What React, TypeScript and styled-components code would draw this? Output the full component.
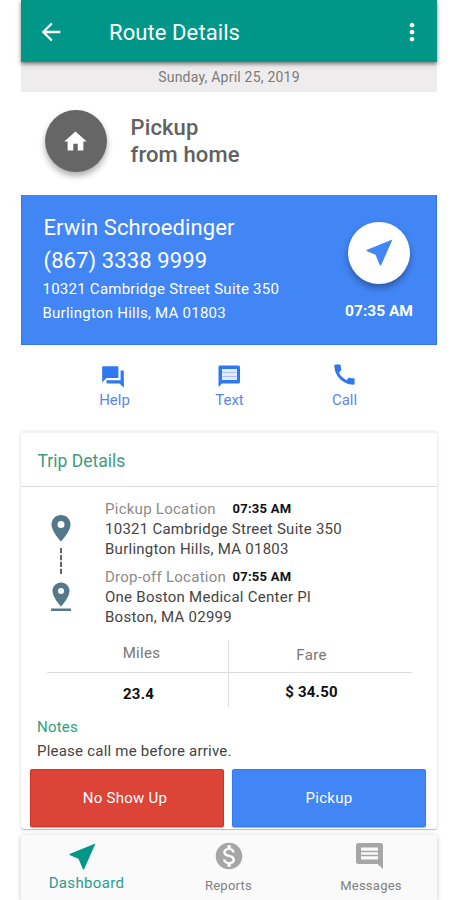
import React from 'react';
import styled, { createGlobalStyle } from 'styled-components';
import {
  MdArrowBack,
  MdCall,
  MdForum,
  MdHome,
  MdMonetizationOn,
  MdMoreVert,
} from 'react-icons/md';

const GlobalStyle = createGlobalStyle`
  * { box-sizing: border-box; }
  body { margin: 0; background: #fff; font-family: Roboto, sans-serif; }
  svg { display: block; flex: none; }
`;

const Screen = styled.main`
  width: 416px;
  height: 900px;
  margin-left: 21px;
  display: flex;
  flex-direction: column;
`;

const AppBar = styled.header`
  flex: none;
  height: 62px;
  padding: 2px 11px 0 15.5px;
  display: flex;
  align-items: center;
  background: #009788;
  color: #fff;
  box-shadow: 0 2px 4px rgba(0, 0, 0, 0.5);
  z-index: 1;
`;

const Title = styled.h1`
  flex: 1;
  margin: 2px 0 0 44.5px;
  font-size: 22px;
  font-weight: 450;
  letter-spacing: 0.09px;
  line-height: 28px;
`;

const DateBar = styled.div`
  flex: none;
  height: 29.5px;
  background: #eeecec;
  color: #7b7b7b;
  font-size: 14px;
  letter-spacing: 0.22px;
  line-height: 30px;
  text-align: center;
`;

const StopBanner = styled.section`
  flex: none;
  height: 103.5px;
  padding: 18.5px 0 0 24px;
  display: flex;
  gap: 23.5px;
`;

const Round = styled.div<{ $bg: string; $fg: string; $nudge?: number }>`
  flex: none;
  width: 62px;
  height: 62px;
  padding-right: ${(p) => p.$nudge ?? 0}px;
  border-radius: 50%;
  display: flex;
  align-items: center;
  justify-content: center;
  background: ${(p) => p.$bg};
  color: ${(p) => p.$fg};
  box-shadow: 0 4px 6px rgba(0, 0, 0, 0.32);
`;

const StopTitle = styled.h2`
  margin: 5px 0 0;
  font-size: 22px;
  font-weight: 500;
  letter-spacing: 0.12px;
  line-height: 26.5px;
  color: #616161;
`;

const ContactCard = styled.section`
  flex: none;
  height: 150px;
  padding: 15.5px 22px 0 21.5px;
  display: flex;
  justify-content: space-between;
  background: #4285f4;
  border: solid #2f78ee;
  border-width: 0 1px 1px;
  color: #fff;
`;

const ContactPrimary = styled.div`
  font-size: 22px;
  line-height: 33px;
  letter-spacing: 0.1px;
`;

const ContactAddress = styled.div`
  margin-left: -1px;
  font-size: 15px;
  line-height: 24.5px;
  letter-spacing: 0.25px;
`;

const Eta = styled.div`
  width: 70px;
  padding-top: 11px;
  display: flex;
  flex-direction: column;
  align-items: center;
`;

const EtaTime = styled.div`
  margin: 17px 0 0;
  font-size: 15.5px;
  font-weight: 700;
  line-height: 20px;
  white-space: nowrap;
`;

const Actions = styled.nav`
  flex: none;
  height: 88px;
  padding: 18px 35px 0 36px;
  display: grid;
  grid-template-columns: repeat(3, 1fr);
`;

const Action = styled.div`
  display: flex;
  flex-direction: column;
  align-items: center;
  color: #2f78f0;
`;

const ActionIcon = styled.div<{ $right?: number; $bottom?: number }>`
  height: 27px;
  padding: 0 ${(p) => p.$right ?? 0}px ${(p) => p.$bottom ?? 0}px 0;
  display: flex;
  align-items: center;
`;

const ActionLabel = styled.span`
  font-size: 15px;
  line-height: 20px;
  color: #5a86ea;
`;

const TripCard = styled.section`
  flex: none;
  height: 395.5px;
  border-radius: 3px;
  background: #fff;
  box-shadow: 0 -3px 1px #f2f2f2, 0 0 4px rgba(0, 0, 0, 0.12), 0 1px 1px rgba(0, 0, 0, 0.22);
`;

const TripTitle = styled.h3`
  margin: 0;
  height: 54px;
  padding: 3px 0 0 16.5px;
  border-bottom: 1px solid #dcdcdc;
  color: #3d9b7f;
  font-size: 17.5px;
  font-weight: 400;
  line-height: 51px;
`;

const Route = styled.div`
  display: flex;
  height: 153px;
`;

const RouteMarkers = styled.div`
  width: 84px;
  padding: 28px 5px 0 0;
  display: flex;
  flex-direction: column;
  align-items: center;
`;

const Stops = styled.div`
  padding-top: 12px;
  display: flex;
  flex-direction: column;
  gap: 8px;
`;

const Stop = styled.div`
  font-size: 15px;
  line-height: 20px;
  letter-spacing: 0.26px;
  color: #444;
`;

const StopHead = styled.div`
  display: grid;
  grid-template-columns: 127.5px auto;
`;

const StopLabel = styled.span`
  color: #8a8a8a;
`;

const StopTime = styled.span`
  font-size: 13px;
  font-weight: 700;
  color: #111;
`;

const Figures = styled.div`
  margin: 0 25px 0 26px;
  height: 67px;
  display: grid;
  grid-template-columns: 181px 1fr;
`;

const Figure = styled.div<{ $divider?: boolean }>`
  border-left: ${(p) => (p.$divider ? '1px solid #dcdcdc' : '0')};
  text-align: center;
`;

const FigureLabel = styled.div<{ $top: number; $left?: number; $right?: number }>`
  height: 33px;
  padding: ${(p) => p.$top}px ${(p) => p.$right ?? 0}px 0 ${(p) => p.$left ?? 0}px;
  border-bottom: 1px solid #dcdcdc;
  font-size: 15px;
  line-height: 20px;
  letter-spacing: 0.3px;
  color: #777;
`;

const FigureValue = styled.div<{ $top: number; $left?: number; $right?: number }>`
  padding: ${(p) => p.$top}px ${(p) => p.$right ?? 0}px 0 ${(p) => p.$left ?? 0}px;
  font-size: 15px;
  font-weight: 700;
  line-height: 20px;
  letter-spacing: 0.2px;
  color: #111;
`;

const Notes = styled.div`
  padding: 9px 0 0 16px;
  height: 61.5px;
  font-size: 15px;
  line-height: 23.5px;
  letter-spacing: 0.22px;
  color: #444;
`;

const NotesTitle = styled.div`
  color: #2ba185;
`;

const Buttons = styled.div`
  padding: 0 11px 0 9px;
  display: grid;
  grid-template-columns: 1fr 1fr;
  gap: 8px;
`;

const Button = styled.button<{ $bg: string; $edge: string }>`
  height: 58.5px;
  padding: 1px 4px 0 0;
  border: 1px solid ${(p) => p.$edge};
  border-radius: 2px;
  background: ${(p) => p.$bg};
  color: #fff;
  font: 450 15px/20px Roboto, sans-serif;
  letter-spacing: 0.25px;
  box-shadow: 0 1px 1px rgba(0, 0, 0, 0.3);

  &:last-child {
    padding-right: 0;
  }
`;

const TabBar = styled.nav`
  flex: none;
  margin-top: 6px;
  height: 65.5px;
  padding: 6.5px 0 0;
  display: grid;
  grid-template-columns: 131px 153px 132px;
  background: #fafafa;
  box-shadow: 0 1px 5px rgba(0, 0, 0, 0.22);
  clip-path: inset(-3px -8px 0 -8px);
`;

const Tab = styled.div<{ $active?: boolean }>`
  display: flex;
  flex-direction: column;
  align-items: center;
  gap: ${(p) => (p.$active ? 3 : 5.5)}px;
  color: ${(p) => (p.$active ? '#009788' : '#a6a6a6')};
`;

const TabIcon = styled.div<{ $left?: number; $right?: number }>`
  height: 30px;
  padding: 0 ${(p) => p.$right ?? 0}px 0 ${(p) => p.$left ?? 0}px;
  display: flex;
  align-items: center;
`;

const TabLabel = styled.span<{ $active?: boolean }>`
  font-size: ${(p) => (p.$active ? 15 : 13)}px;
  line-height: 18px;
  letter-spacing: ${(p) => (p.$active ? 0.35 : 0.25)}px;
  color: ${(p) => (p.$active ? '#2a9d8d' : '#808080')};
`;

const NavigateIcon = () => (
  <svg width="27" height="27" viewBox="0 0 27 27" fill="currentColor">
    <path d="M26.500 0.500L0.500 11v1l9 3.800L14 26.500h1z" />
  </svg>
);

const ChatIcon = () => (
  <svg width="23" height="23" viewBox="0 0 23 23">
    <path d="M1.500 0.500h19a1.500 1.500 0 0 1 1.500 1.500v15a1.500 1.500 0 0 1-1.500 1.500H4L0.500 22V2A1.500 1.500 0 0 1 1.500 0.500z" fill="#2f78f0" />
    <path d="M4 4h15v11H4z" fill="#e3ebff" />
    <path d="M4.500 7.500h14M4.500 11.500h14" stroke="#a9c0f5" strokeWidth="1.200" />
  </svg>
);

const CommentIcon = () => (
  <svg width="27" height="26" viewBox="0 0 27 26">
    <path
      fillRule="evenodd"
      fill="#a6a6a6"
      d="M2.500 0h22A2.500 2.500 0 0 1 27 2.500V26l-5.500-5H2.500A2.500 2.500 0 0 1 0 18.500V2.500A2.500 2.500 0 0 1 2.500 0zM5 4.500v12h17v-12z"
    />
    <path d="M5 8.500h17M5 12.500h17" stroke="#a6a6a6" strokeWidth="1.300" />
  </svg>
);

const RouteIcon = () => (
  <svg width="22" height="98" viewBox="0 0 22 98" fill="none">
    <path d="M11 33v26" stroke="#333" strokeWidth="1.500" strokeDasharray="5.300 1.600" />
    <g fill="#54788a" fillRule="evenodd">
      <path d="M11 0C5.600 0 1.500 4.200 1.500 9.500 1.500 16.500 11 26.500 11 26.500s9.500-10 9.500-17C20.500 4.200 16.400 0 11 0zm0 6a3.500 3.500 0 1 1 0 7 3.500 3.500 0 0 1 0-7z" />
      <path d="M11 67.500c-4.900 0-8.500 3.800-8.500 8.500C2.500 82.500 11 91.500 11 91.500s8.500-9 8.500-15.500C19.500 71.300 15.900 67.500 11 67.500zm0 5.500a3 3 0 1 1 0 6 3 3 0 0 1 0-6z" />
      <path d="M1 93.500h20V96H1z" />
    </g>
  </svg>
);

interface TripStop {
  label: string;
  time: string;
  lines: string[];
}

const stops: TripStop[] = [
  {
    label: 'Pickup Location',
    time: '07:35 AM',
    lines: ['10321 Cambridge Street Suite 350', 'Burlington Hills, MA 01803'],
  },
  {
    label: 'Drop-off Location',
    time: '07:55 AM',
    lines: ['One Boston Medical Center Pl', 'Boston, MA 02999'],
  },
];

export default function App() {
  return (
    <>
      <GlobalStyle />
      <Screen>
        <AppBar>
          <MdArrowBack size={28} />
          <Title>Route Details</Title>
          <MdMoreVert size={28} />
        </AppBar>
        <DateBar>Sunday, April 25, 2019</DateBar>

        <StopBanner>
          <Round $bg="#666" $fg="#fff" $nudge={1}>
            <MdHome size={27} />
          </Round>
          <StopTitle>
            Pickup
            <br />
            from home
          </StopTitle>
        </StopBanner>

        <ContactCard>
          <div>
            <ContactPrimary>Erwin Schroedinger</ContactPrimary>
            <ContactPrimary>(867) 3338 9999</ContactPrimary>
            <ContactAddress>10321 Cambridge Street Suite 350</ContactAddress>
            <ContactAddress>Burlington Hills, MA 01803</ContactAddress>
          </div>
          <Eta>
            <Round $bg="#fff" $fg="#4285f4">
              <NavigateIcon />
            </Round>
            <EtaTime>07:35 AM</EtaTime>
          </Eta>
        </ContactCard>

        <Actions>
          <Action>
            <ActionIcon $right={4}><MdForum size={26} /></ActionIcon>
            <ActionLabel>Help</ActionLabel>
          </Action>
          <Action>
            <ActionIcon><ChatIcon /></ActionIcon>
            <ActionLabel>Text</ActionLabel>
          </Action>
          <Action>
            <ActionIcon $bottom={4}><MdCall size={27} /></ActionIcon>
            <ActionLabel>Call</ActionLabel>
          </Action>
        </Actions>

        <TripCard>
          <TripTitle>Trip Details</TripTitle>
          <Route>
            <RouteMarkers>
              <RouteIcon />
            </RouteMarkers>
            <Stops>
              {stops.map((stop) => (
                <Stop key={stop.label}>
                  <StopHead>
                    <StopLabel>{stop.label}</StopLabel>
                    <StopTime>{stop.time}</StopTime>
                  </StopHead>
                  {stop.lines.map((line) => (
                    <div key={line}>{line}</div>
                  ))}
                </Stop>
              ))}
            </Stops>
          </Route>
          <Figures>
            <Figure>
              <FigureLabel $top={3} $left={8}>Miles</FigureLabel>
              <FigureValue $top={11} $left={2}>23.4</FigureValue>
            </Figure>
            <Figure $divider>
              <FigureLabel $top={5} $right={18}>Fare</FigureLabel>
              <FigureValue $top={9} $right={18}>$ 34.50</FigureValue>
            </Figure>
          </Figures>
          <Notes>
            <NotesTitle>Notes</NotesTitle>
            <div>Please call me before arrive.</div>
          </Notes>
          <Buttons>
            <Button $bg="#db4437" $edge="#cf3427">No Show Up</Button>
            <Button $bg="#4285f4" $edge="#357bf0">Pickup</Button>
          </Buttons>
        </TripCard>

        <TabBar>
          <Tab $active>
            <TabIcon $right={8}><NavigateIcon /></TabIcon>
            <TabLabel $active>Dashboard</TabLabel>
          </Tab>
          <Tab>
            <TabIcon $left={1}><MdMonetizationOn size={32} /></TabIcon>
            <TabLabel>Reports</TabLabel>
          </Tab>
          <Tab>
            <TabIcon $right={3}><CommentIcon /></TabIcon>
            <TabLabel>Messages</TabLabel>
          </Tab>
        </TabBar>
      </Screen>
    </>
  );
}
